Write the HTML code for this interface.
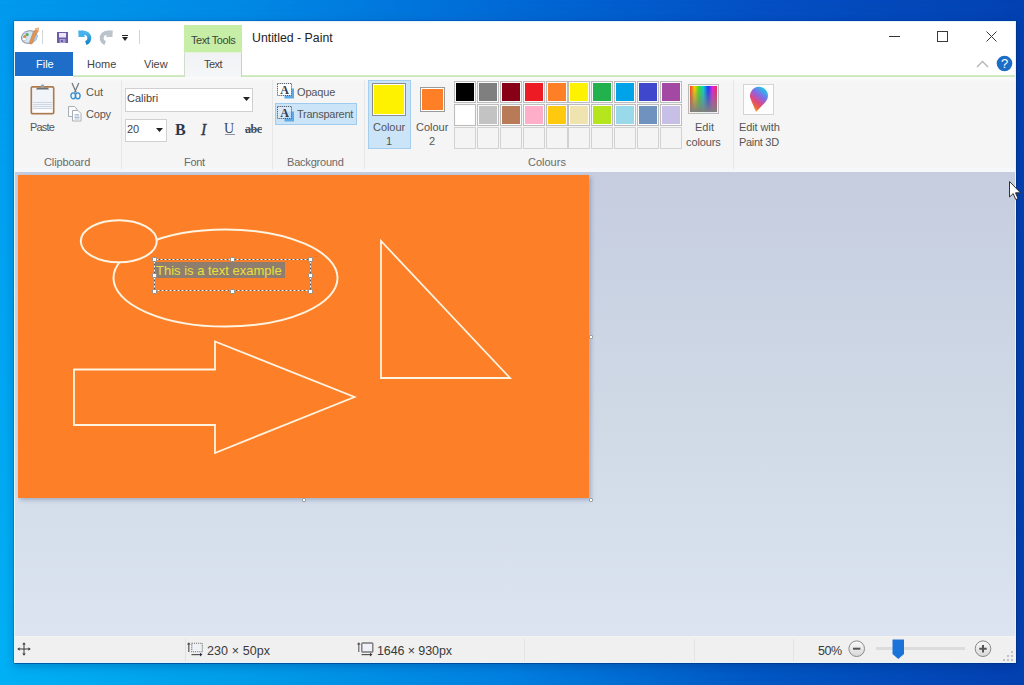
<!DOCTYPE html>
<html><head><meta charset="utf-8">
<style>
*{margin:0;padding:0;box-sizing:border-box}
html,body{width:1024px;height:685px;overflow:hidden}
body{position:relative;font-family:"Liberation Sans",sans-serif;
background:linear-gradient(to right,#009aee 0%,#0088e4 24%,#006ad6 49%,#0450c4 73%,#0343b4 97%,#0340b0 100%);}
#deskb{position:absolute;left:0;top:0;width:1024px;height:685px;
background:linear-gradient(to right,#00b0f4 0%,#009ce8 24%,#0080e0 49%,#0058c4 73%,#0340b0 100%);
-webkit-mask-image:linear-gradient(to bottom,rgba(0,0,0,0) 0%,rgba(0,0,0,1) 100%);mask-image:linear-gradient(to bottom,rgba(0,0,0,0) 0%,rgba(0,0,0,1) 100%)}
.a{position:absolute}
.t{position:absolute;white-space:nowrap;color:#555;font-size:11px;line-height:13px}
.sep{position:absolute;width:1px;background:#e6e7e9}
.cell{position:absolute;width:22px;height:22px;border:1px solid #bdbdbd;padding:1px;background:#fbfbfb}
.cell i{display:block;width:100%;height:100%}
.cell.e{border-color:#d2d2d2;background:#f4f4f4}
.h{position:absolute;width:5px;height:5px;background:#fff;border:1px solid #8a8a8a;border-radius:1.5px}
svg{position:absolute;overflow:visible}
</style></head><body>
<div id="deskb"></div>
<!-- window -->
<div class="a" style="left:14px;top:21px;width:1002px;height:642px;background:#fff;border:1px solid #e2f4fc;box-shadow:0 0 0 1px rgba(0,50,130,0.22),1px 1px 0 0 rgba(0,40,120,0.4),0 3px 9px rgba(0,30,90,0.28)"></div>

<!-- title bar -->
<div class="a" style="left:184px;top:25px;width:58px;height:27px;background:#c6eea6"></div>
<div class="t" style="left:191px;top:34px;color:#3c463c;font-size:11px;letter-spacing:-0.45px">Text Tools</div>
<div class="t" style="left:252px;top:31px;color:#222;font-size:12.3px;line-height:14px">Untitled - Paint</div>

<!-- tabs row -->
<div class="a" style="left:15px;top:52px;width:58px;height:24px;background:#1e6ec9"></div>
<div class="t" style="left:36px;top:58px;color:#fff;font-size:11px">File</div>
<div class="t" style="left:87px;top:58px;color:#444">Home</div>
<div class="t" style="left:144px;top:58px;color:#444">View</div>
<div class="a" style="left:184px;top:52px;width:58px;height:26px;background:linear-gradient(#f1f2f5,#f6f7f8);border-left:1px solid #d2dccd;border-right:1px solid #b8e29c;border-top:1px solid #e4f6d8"></div>
<div class="t" style="left:204px;top:58px;color:#444;letter-spacing:-0.5px">Text</div>
<div class="a" style="left:73px;top:75px;width:111px;height:2px;background:linear-gradient(#d4eec6,#c9e6bb)"></div>
<div class="a" style="left:242px;top:75px;width:773px;height:2px;background:linear-gradient(#d4eec6,#c9e6bb)"></div>

<!-- ribbon body -->
<div class="a" style="left:15px;top:77px;width:1000px;height:95px;background:linear-gradient(#fbfbfb 0px,#f5f5f5 6px)"></div>
<div class="a" style="left:15px;top:168px;width:1000px;height:4px;background:#f6f7fb"></div>

<!-- canvas area -->
<div class="a" style="left:15px;top:172px;width:1000px;height:464px;background:linear-gradient(180deg,#c5cddf 0%,#cfd9e6 50%,#dbe4f0 100%)"></div>

<!-- status bar -->
<div class="a" style="left:15px;top:636px;width:1000px;height:26px;background:#f0f0f0;border-top:1px solid #f5f2ef"></div>
<!-- QAT icons -->
<svg style="left:18px;top:24px" width="24" height="24" viewBox="0 0 24 24">
  <ellipse cx="11.3" cy="13" rx="8" ry="6.2" transform="rotate(-15 11.3 13)" fill="#d3e6f6" stroke="#8e98a4" stroke-width="1"/>
  <path d="M14 8 C17 8 19 10 19 13 C19 16 17 18 14 19 Z" fill="#a8cdee" opacity="0.8"/>
  <ellipse cx="6.3" cy="15" rx="2.2" ry="1.6" fill="#fff" stroke="#9aa" stroke-width="0.5"/>
  <circle cx="6.8" cy="12.5" r="1.6" fill="#d88c48"/><circle cx="9.2" cy="10.4" r="1.5" fill="#4cae4c"/>
  <circle cx="7" cy="8.8" r="1.2" fill="#c4b4f0"/>
  <path d="M11 19.5 L15 9 L17 6 L20.5 4 L20 8 L18 10 L14 20 Z" fill="#e39454" stroke="#c07840" stroke-width="0.5"/>
  <path d="M16.5 4.2 L20.8 3.6 L20.5 7.8 Z" fill="#ebb88a"/>
</svg>
<div class="a" style="left:42px;top:30px;width:1px;height:14px;background:#d4d4d4"></div>
<svg style="left:57px;top:32px" width="11" height="11" viewBox="0 0 11 11">
  <rect x="0" y="0" width="11" height="11" fill="#6c5ca8"/>
  <rect x="2" y="1" width="7" height="4.5" fill="#ebe8f6"/>
  <rect x="2.5" y="7" width="6" height="4" fill="#a89fd2"/>
  <rect x="4" y="8" width="2" height="2" fill="#6c5ca8"/>
</svg>
<svg style="left:74px;top:26px" width="22" height="22" viewBox="0 0 22 22">
  <defs><linearGradient id="ug" x1="0" y1="0" x2="0" y2="1"><stop offset="0" stop-color="#4cb6ee"/><stop offset="1" stop-color="#1784cc"/></linearGradient></defs>
  <path d="M8 6.7 H10 A5.3 5.3 0 0 1 11.8 17" fill="none" stroke="url(#ug)" stroke-width="4"/>
  <path d="M4.2 4.5 L9.5 4.5 L10.8 10.9 L4.6 10.9 Z" fill="#45b2ec"/>
</svg>
<svg style="left:95px;top:26px" width="22" height="22" viewBox="0 0 22 22">
  <g transform="translate(22 0) scale(-1 1)">
  <path d="M8 6.7 H10 A5.3 5.3 0 0 1 11.8 17" fill="none" stroke="#b9c1ca" stroke-width="4"/>
  <path d="M4.2 4.5 L9.5 4.5 L10.8 10.9 L4.6 10.9 Z" fill="#bcc4cc"/>
  </g>
</svg>
<div class="a" style="left:122px;top:35px;width:6px;height:1px;background:#222"></div>
<svg style="left:121px;top:37px" width="8" height="5" viewBox="0 0 8 5"><path d="M1 0 L7 0 L4 4 Z" fill="#222"/></svg>
<div class="a" style="left:139px;top:30px;width:1px;height:14px;background:#d4d4d4"></div>

<!-- window controls -->
<div class="a" style="left:889px;top:36px;width:11px;height:1px;background:#333"></div>
<div class="a" style="left:937px;top:31px;width:11px;height:11px;border:1px solid #3a3a3a"></div>
<svg style="left:986px;top:31px" width="11" height="11" viewBox="0 0 11 11"><path d="M0.5 0.5 L10.5 10.5 M10.5 0.5 L0.5 10.5" stroke="#3a3a3a" stroke-width="1"/></svg>
<svg style="left:976px;top:60px" width="13" height="8" viewBox="0 0 13 8"><path d="M1 7 L6.5 1.5 L12 7" stroke="#b4b4b4" stroke-width="1.4" fill="none"/></svg>
<svg style="left:996px;top:55px" width="17" height="17" viewBox="0 0 17 17"><circle cx="8.5" cy="8.5" r="7.8" fill="#1c6dc8"/>
<text x="8.5" y="13.2" text-anchor="middle" font-family="Liberation Sans" font-size="13" fill="#fff">?</text></svg>
<!-- Clipboard group -->
<svg style="left:30px;top:84px" width="25" height="31" viewBox="0 0 25 31">
  <rect x="1.4" y="2.9" width="22.2" height="26.7" rx="1.2" fill="#fff" stroke="#ad7a4e" stroke-width="1.8"/>
  <rect x="2.5" y="4" width="20" height="24.5" fill="#f1f4f8"/>
  <path d="M3 18.5H22M3 20.5H22M3 22.5H22M3 24.5H22M3 26.5H22" stroke="#c8d2de" stroke-width="0.9"/>
  <rect x="3" y="25.5" width="19" height="2.5" fill="#fff"/>
  <path d="M6 5.5 L7 3.8 H18 L19 5.5 Z" fill="#6a7078"/>
  <rect x="11" y="0.5" width="3" height="3.5" rx="1" fill="#9aa0a8"/>
</svg>
<div class="t" style="left:30px;top:121px;letter-spacing:-0.8px">Paste</div>
<svg style="left:69px;top:82px" width="13" height="18" viewBox="0 0 13 18">
  <path d="M3 1 L7.2 10.5 M9.8 1 L5.6 10.5" stroke="#6f7780" stroke-width="1.2"/>
  <ellipse cx="4.2" cy="13.8" rx="2.3" ry="3" fill="none" stroke="#2c8ad4" stroke-width="1.3"/>
  <ellipse cx="8.8" cy="13.8" rx="2.3" ry="3" fill="none" stroke="#2c8ad4" stroke-width="1.3"/>
</svg>
<div class="t" style="left:86px;top:86px">Cut</div>
<svg style="left:68px;top:105px" width="14" height="17" viewBox="0 0 14 17">
  <path d="M0.5 1.5 H6.5 L9 4 V11.5 H0.5 Z" fill="#fafafa" stroke="#a9aeb4" stroke-width="1"/>
  <path d="M4.5 5.5 H10 L13 8.5 V16 H4.5 Z" fill="#fff" stroke="#a9aeb4" stroke-width="1"/>
  <path d="M6.5 9.5H11M6.5 11H11.5M6.5 12.5H11.5M6.5 14H11.5" stroke="#a8b6cc" stroke-width="0.9"/>
</svg>
<div class="t" style="left:86px;top:108px;letter-spacing:-0.2px">Copy</div>
<div class="t" style="left:44px;top:156px;letter-spacing:-0.1px;color:#6a6a6a">Clipboard</div>
<div class="sep" style="left:121px;top:80px;height:89px"></div>

<!-- Font group -->
<div class="a" style="left:125px;top:88px;width:128px;height:24px;background:#fff;border:1px solid #d0d0d0"></div>
<div class="t" style="left:127px;top:92px;color:#444">Calibri</div>
<svg style="left:243px;top:97px" width="7" height="4" viewBox="0 0 7 4"><path d="M0 0H7L3.5 4Z" fill="#222"/></svg>
<div class="a" style="left:125px;top:119px;width:42px;height:23px;background:#fff;border:1px solid #d0d0d0"></div>
<div class="t" style="left:127px;top:123px;color:#444">20</div>
<svg style="left:156px;top:128px" width="7" height="4" viewBox="0 0 7 4"><path d="M0 0H7L3.5 4Z" fill="#222"/></svg>
<div class="t" style="left:175px;top:121px;font-family:'Liberation Serif',serif;font-weight:bold;font-size:16px;line-height:17px;color:#2a3850">B</div>
<div class="t" style="left:201px;top:121px;font-family:'Liberation Serif',serif;font-style:italic;font-size:16px;line-height:17px;color:#2a3850;-webkit-text-stroke:0.3px #2a3850">I</div>
<div class="t" style="left:224px;top:121px;font-family:'Liberation Serif',serif;font-size:14px;line-height:16px;color:#3a465c">U</div>
<div class="a" style="left:225px;top:134px;width:10px;height:1px;background:#8a94a4"></div>
<div class="t" style="left:245px;top:121px;font-family:'Liberation Serif',serif;font-weight:bold;font-size:12px;line-height:16px;color:#3e4a5e;letter-spacing:-0.4px">abc</div>
<div class="a" style="left:245px;top:129px;width:17px;height:1px;background:#5a6476"></div>
<div class="t" style="left:184px;top:156px;letter-spacing:-0.3px;color:#6a6a6a">Font</div>
<div class="sep" style="left:272px;top:80px;height:89px"></div>

<!-- Background group -->
<svg style="left:277px;top:83px" width="20" height="17" viewBox="0 0 20 17">
  <rect x="7.5" y="5.5" width="9.5" height="10" fill="#5da9e6"/>
  <rect x="0.5" y="0.5" width="14" height="12" fill="#fff" stroke="#4e5a6c" stroke-width="1" stroke-dasharray="1.2 0.9"/>
  <text x="7.5" y="11" text-anchor="middle" font-family="Liberation Serif" font-size="12" font-weight="bold" fill="#2e3c54">A</text>
</svg>
<div class="t" style="left:297px;top:86px;letter-spacing:-0.15px">Opaque</div>
<div class="a" style="left:275px;top:103px;width:82px;height:22px;background:#cce4f7;border:1px solid #9fcbee"></div>
<svg style="left:277px;top:106px" width="20" height="17" viewBox="0 0 20 17">
  <rect x="7.5" y="5.5" width="9.5" height="10" fill="#5da9e6"/>
  <rect x="0.5" y="0.5" width="14" height="12" fill="rgba(225,236,248,0.75)" stroke="#4e5a6c" stroke-width="1" stroke-dasharray="1.2 0.9"/>
  <text x="7.5" y="11" text-anchor="middle" font-family="Liberation Serif" font-size="12" font-weight="bold" fill="#2e3c54">A</text>
</svg>
<div class="t" style="left:297px;top:108px;letter-spacing:-0.25px">Transparent</div>
<div class="t" style="left:287px;top:156px;letter-spacing:-0.2px;color:#6a6a6a">Background</div>
<div class="sep" style="left:364px;top:80px;height:89px"></div>

<!-- Colours group -->
<div class="a" style="left:368px;top:80px;width:43px;height:69px;background:#cce4f7;border:1px solid #a4cdee"></div>
<div class="a" style="left:372px;top:83px;width:34px;height:33px;background:#fff200;border:1px solid #8c8c8c;box-shadow:inset 0 0 0 1px #fff"></div>
<div class="t" style="left:373px;top:121px;letter-spacing:-0.05px">Colour</div>
<div class="t" style="left:386px;top:135px">1</div>
<div class="a" style="left:420px;top:87px;width:25px;height:25px;background:#ff7f27;border:1px solid #9a9a9a;box-shadow:inset 0 0 0 1px #fff"></div>
<div class="t" style="left:416px;top:121px">Colour</div>
<div class="t" style="left:429px;top:135px">2</div>
<div class="cell" style="left:454px;top:81px"><i style="background:#000000"></i></div>
<div class="cell" style="left:454px;top:104px"><i style="background:#ffffff"></i></div>
<div class="cell e" style="left:454px;top:127px"></div>
<div class="cell" style="left:477px;top:81px"><i style="background:#7f7f7f"></i></div>
<div class="cell" style="left:477px;top:104px"><i style="background:#c3c3c3"></i></div>
<div class="cell e" style="left:477px;top:127px"></div>
<div class="cell" style="left:500px;top:81px"><i style="background:#880015"></i></div>
<div class="cell" style="left:500px;top:104px"><i style="background:#b97a57"></i></div>
<div class="cell e" style="left:500px;top:127px"></div>
<div class="cell" style="left:523px;top:81px"><i style="background:#ed1c24"></i></div>
<div class="cell" style="left:523px;top:104px"><i style="background:#ffaec9"></i></div>
<div class="cell e" style="left:523px;top:127px"></div>
<div class="cell" style="left:546px;top:81px"><i style="background:#ff7f27"></i></div>
<div class="cell" style="left:546px;top:104px"><i style="background:#ffc90e"></i></div>
<div class="cell e" style="left:546px;top:127px"></div>
<div class="cell" style="left:568px;top:81px"><i style="background:#fff200"></i></div>
<div class="cell" style="left:568px;top:104px"><i style="background:#efe4b0"></i></div>
<div class="cell e" style="left:568px;top:127px"></div>
<div class="cell" style="left:591px;top:81px"><i style="background:#22b14c"></i></div>
<div class="cell" style="left:591px;top:104px"><i style="background:#b5e61d"></i></div>
<div class="cell e" style="left:591px;top:127px"></div>
<div class="cell" style="left:614px;top:81px"><i style="background:#00a2e8"></i></div>
<div class="cell" style="left:614px;top:104px"><i style="background:#99d9ea"></i></div>
<div class="cell e" style="left:614px;top:127px"></div>
<div class="cell" style="left:637px;top:81px"><i style="background:#3f48cc"></i></div>
<div class="cell" style="left:637px;top:104px"><i style="background:#7092be"></i></div>
<div class="cell e" style="left:637px;top:127px"></div>
<div class="cell" style="left:660px;top:81px"><i style="background:#a349a4"></i></div>
<div class="cell" style="left:660px;top:104px"><i style="background:#c8bfe7"></i></div>
<div class="cell e" style="left:660px;top:127px"></div>
<div class="t" style="left:528px;top:156px;color:#6a6a6a">Colours</div>
<svg style="left:688px;top:84px" width="31" height="30" viewBox="0 0 32 31" preserveAspectRatio="none">
  <defs>
   <linearGradient id="rb" x1="0" y1="0" x2="1" y2="0">
    <stop offset="0" stop-color="#ff3a20"/><stop offset="0.17" stop-color="#ffd200"/><stop offset="0.33" stop-color="#40e020"/>
    <stop offset="0.5" stop-color="#00d0d8"/><stop offset="0.67" stop-color="#1830ff"/><stop offset="0.83" stop-color="#e020e0"/><stop offset="1" stop-color="#ff2050"/>
   </linearGradient>
   <linearGradient id="gr" x1="0" y1="0" x2="0" y2="1"><stop offset="0" stop-color="#808080" stop-opacity="0"/><stop offset="1" stop-color="#808080" stop-opacity="1"/></linearGradient>
  </defs>
  <rect x="0.5" y="0.5" width="31" height="30" fill="#fff" stroke="#b8b8b8"/>
  <rect x="2" y="2" width="28" height="27" fill="url(#rb)"/>
  <rect x="2" y="2" width="28" height="27" fill="url(#gr)"/>
</svg>
<div class="t" style="left:695px;top:121px">Edit</div>
<div class="t" style="left:686px;top:136px;letter-spacing:-0.1px">colours</div>
<div class="sep" style="left:733px;top:80px;height:89px"></div>
<div class="a" style="left:743px;top:84px;width:31px;height:31px;background:#fdfdfd;border:1px solid #d4d4d4"></div>
<svg style="left:743px;top:84px" width="32" height="31" viewBox="0 0 32 31">
  <defs><linearGradient id="p3" x1="0.8" y1="0.05" x2="0.25" y2="1">
   <stop offset="0" stop-color="#18cce8"/><stop offset="0.35" stop-color="#8468e6"/><stop offset="0.62" stop-color="#e24880"/><stop offset="0.82" stop-color="#ea6a3a"/><stop offset="1" stop-color="#ffc22a"/></linearGradient></defs>
  <path d="M13 28 L22.5 18 A9 9 0 1 0 7.7 15.3 Z" fill="url(#p3)"/>
</svg>
<div class="t" style="left:739px;top:121px;letter-spacing:-0.1px">Edit with</div>
<div class="t" style="left:739px;top:136px;letter-spacing:-0.3px">Paint 3D</div>
<!-- drawing canvas -->
<div class="a" style="left:18px;top:175px;width:571px;height:323px;background:#fd7f27;box-shadow:2px 2px 4px rgba(70,90,130,0.35)"></div>
<svg style="left:0;top:0" width="1024" height="685" viewBox="0 0 1024 685">
  <g fill="none" stroke="#fff4e2" stroke-width="2">
    <ellipse cx="225.5" cy="278" rx="112" ry="48.5"/>
    <path d="M74 369.5 H215 V341.5 L354.5 397 L215 453 V425 H74 Z" stroke-width="1.8"/>
    <path d="M381 241 V378 H510 Z" stroke-width="1.8"/>
  </g>
  <ellipse cx="118.8" cy="241.2" rx="38" ry="21" fill="#fd7f27" stroke="#fff4e2" stroke-width="2"/>
</svg>
<div class="a" style="left:155px;top:262px;width:130px;height:16px;background:#8f7e6d"></div>
<div class="t" style="left:156px;top:264px;font-size:13px;line-height:14px;color:#e9df3c">This is a text example</div>
<svg style="left:0;top:0" width="1024" height="685" viewBox="0 0 1024 685">
  <rect x="154.5" y="259.5" width="156" height="31" fill="none" stroke="#fff" stroke-width="1"/>
  <rect x="154.5" y="259.5" width="156" height="31" fill="none" stroke="#5a5a5a" stroke-width="1" stroke-dasharray="2 2"/>
</svg>
<div class="h" style="left:152px;top:257px"></div>
<div class="h" style="left:230px;top:257px"></div>
<div class="h" style="left:308px;top:257px"></div>
<div class="h" style="left:152px;top:273px"></div>
<div class="h" style="left:308px;top:273px"></div>
<div class="h" style="left:152px;top:289px"></div>
<div class="h" style="left:230px;top:289px"></div>
<div class="h" style="left:308px;top:289px"></div>
<div class="h" style="left:589px;top:335px;width:4px;height:4px"></div>
<div class="h" style="left:302px;top:498px;width:4px;height:4px"></div>
<div class="h" style="left:589px;top:498px;width:4px;height:4px"></div>

<!-- cursor -->
<svg style="left:1009px;top:181px" width="13" height="20" viewBox="0 0 13 20">
  <path d="M0.5 0.5 V16 L4.2 12.6 L6.8 18.6 L9 17.6 L6.5 11.8 L11.5 11.8 Z" fill="#fff" stroke="#333" stroke-width="1"/>
</svg>

<!-- status bar content -->
<svg style="left:17px;top:642px" width="14" height="14" viewBox="0 0 14 14">
  <path d="M7 2 V12 M2 7 H12" stroke="#3a3a3a" stroke-width="1"/>
  <path d="M7 0.3 L5.3 2.6 H8.7Z M7 13.7 L5.3 11.4 H8.7Z M0.3 7 L2.6 5.3 V8.7Z M13.7 7 L11.4 5.3 V8.7Z" fill="#3a3a3a"/>
</svg>
<div class="sep" style="left:185px;top:639px;height:22px;background:#e2e2e2"></div>
<svg style="left:186px;top:641px" width="18" height="16" viewBox="0 0 18 16">
  <path d="M2.8 3 V11" stroke="#555" stroke-width="1.2"/>
  <path d="M1 3.5 L2.8 1.2 L4.6 3.5Z" fill="#444"/>
  <path d="M5.5 13.6 H14.5" stroke="#555" stroke-width="1.2"/>
  <path d="M14 11.8 L16.4 13.6 L14 15.4Z" fill="#2a2a50"/>
  <rect x="5.8" y="2.2" width="10.5" height="8.6" fill="#eef1f5" stroke="#707070" stroke-width="1.1" stroke-dasharray="1.1 1"/>
</svg>
<div class="t" style="left:207px;top:644px;font-size:12.5px;line-height:15px;color:#3a3a3a;letter-spacing:0.1px">230 × 50px</div>
<svg style="left:356px;top:641px" width="18" height="16" viewBox="0 0 18 16">
  <path d="M2.8 3 V11" stroke="#666" stroke-width="1.2"/>
  <path d="M1 3.5 L2.8 1.2 L4.6 3.5Z" fill="#444"/>
  <path d="M5.5 13.6 H14.5" stroke="#555" stroke-width="1.2"/>
  <path d="M14 11.8 L16.4 13.6 L14 15.4Z" fill="#333"/>
  <rect x="5.8" y="2" width="11" height="9" rx="0.8" fill="#eef2f8" stroke="#7a7a7a" stroke-width="1.4"/>
</svg>
<div class="t" style="left:377px;top:644px;font-size:12.5px;line-height:15px;color:#3a3a3a;letter-spacing:-0.1px">1646 × 930px</div>
<div class="sep" style="left:524px;top:639px;height:22px;background:#e4e4e4"></div>
<div class="sep" style="left:694px;top:639px;height:22px;background:#e4e4e4"></div>
<div class="sep" style="left:793px;top:639px;height:22px;background:#e4e4e4"></div>
<div class="t" style="left:818px;top:644px;font-size:12.5px;line-height:15px;color:#3a3a3a;letter-spacing:-0.5px">50%</div>
<svg style="left:848px;top:640px" width="18" height="18" viewBox="0 0 18 18">
  <defs><linearGradient id="zb" x1="0" y1="0" x2="0" y2="1"><stop offset="0" stop-color="#fafafa"/><stop offset="1" stop-color="#d8d8d8"/></linearGradient></defs>
  <circle cx="8.7" cy="8.7" r="7.8" fill="url(#zb)" stroke="#8a8a8a" stroke-width="1"/>
  <path d="M5 8.7 H12.4" stroke="#555" stroke-width="2"/>
</svg>
<div class="a" style="left:876px;top:647px;width:89px;height:3px;background:#dcdcdc"></div>
<svg style="left:892px;top:639px" width="13" height="21" viewBox="0 0 13 21">
  <path d="M0.5 0.5 H12 V15 L6.25 20 L0.5 15 Z" fill="#1a73d8"/>
</svg>
<svg style="left:974px;top:640px" width="18" height="18" viewBox="0 0 18 18">
  <circle cx="9" cy="8.7" r="7.8" fill="url(#zb)" stroke="#8a8a8a" stroke-width="1"/>
  <path d="M5.3 8.7 H12.7 M9 5 V12.4" stroke="#555" stroke-width="2"/>
</svg>
<svg style="left:1002px;top:650px" width="12" height="12" viewBox="0 0 12 12">
  <g fill="#c4c4c4"><rect x="9" y="1" width="2" height="2"/><rect x="9" y="5" width="2" height="2"/><rect x="5" y="5" width="2" height="2"/><rect x="9" y="9" width="2" height="2"/><rect x="5" y="9" width="2" height="2"/><rect x="1" y="9" width="2" height="2"/></g>
</svg>
</body></html>
